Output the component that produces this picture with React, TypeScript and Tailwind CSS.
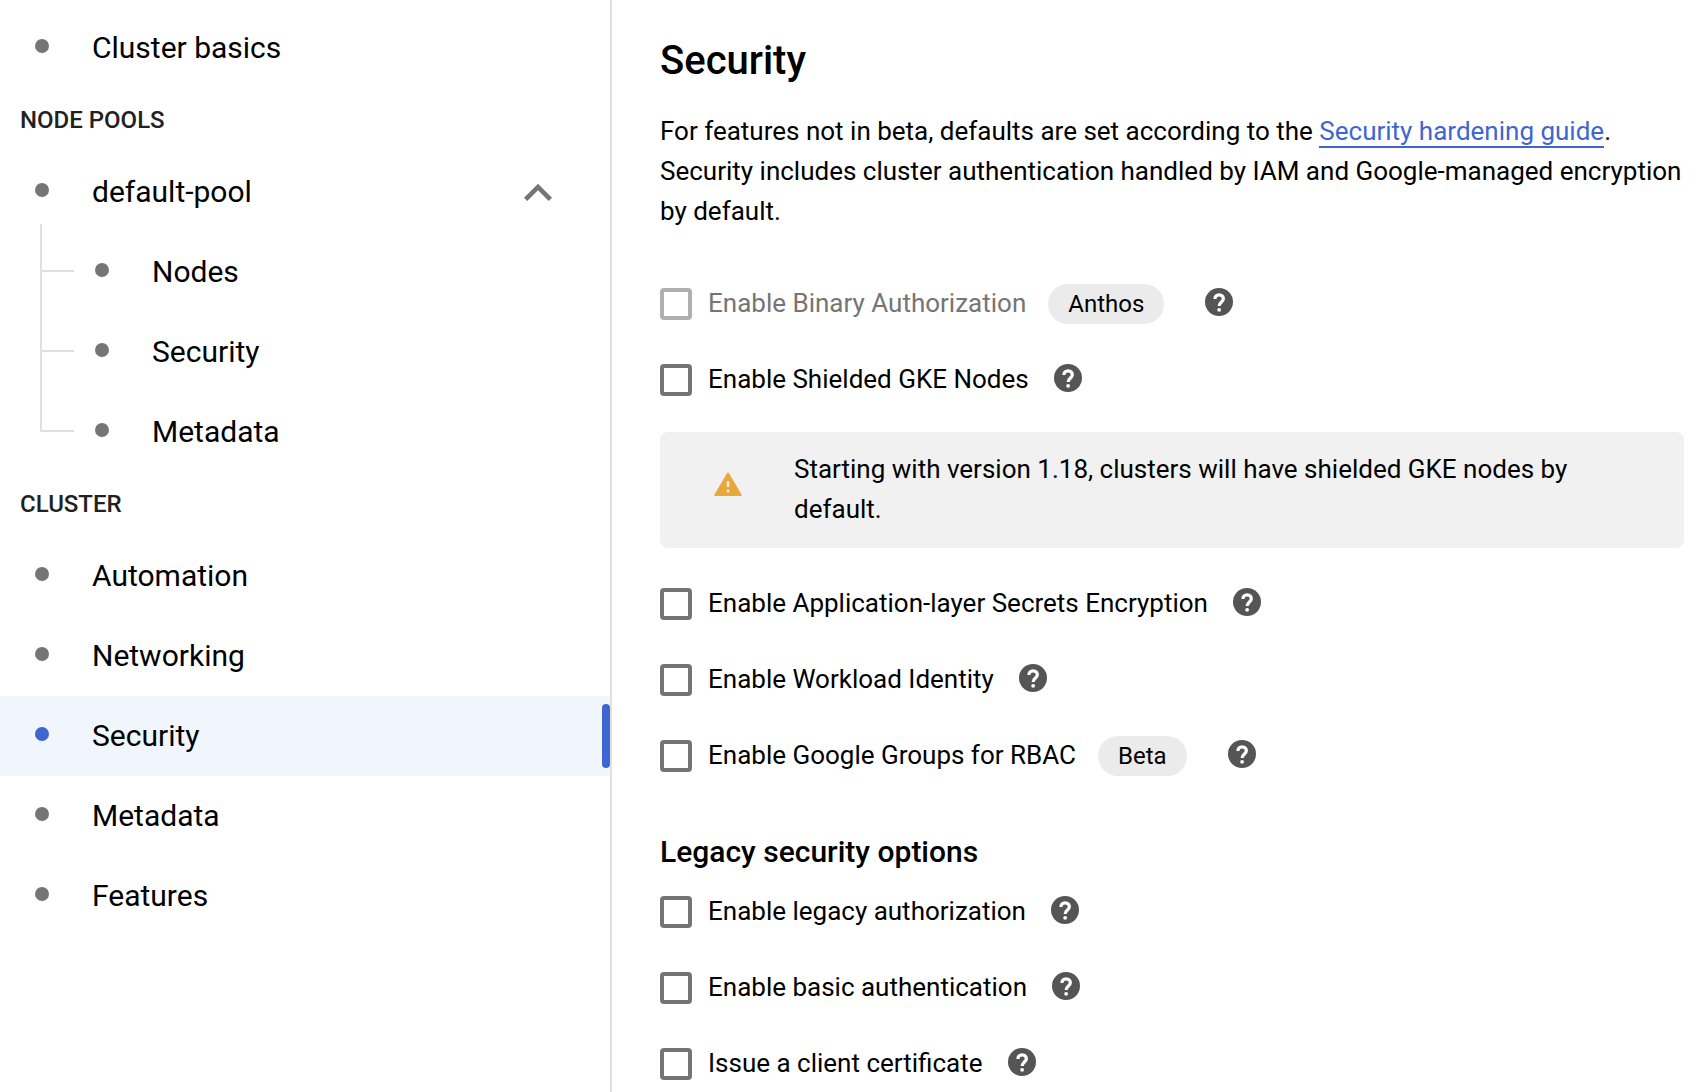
import { useState } from "react";

type NavEntry = { label: string; active?: boolean };

function Dot({ active = false }: { active?: boolean }) {
  return (
    <span
      className={`mb-1 size-3.5 shrink-0 rounded-full ${active ? "bg-[#3f66d0]" : "bg-[#757575]"}`}
    />
  );
}

function NavItem({ label, active = false }: NavEntry) {
  return (
    <li>
      <a
        href="#"
        aria-current={active ? "page" : undefined}
        className={`relative flex h-20 items-center gap-[43px] pl-[35px] ${active ? "bg-[#f0f5fe]" : ""}`}
      >
        <Dot active={active} />
        <span>{label}</span>
        {active && <span className="absolute inset-y-2 right-0 w-2 rounded-sm bg-[#3f66d0]" />}
      </a>
    </li>
  );
}

function SubItem({ label, first = false }: { label: string; first?: boolean }) {
  return (
    <li className="relative">
      <span
        className={`absolute left-10 w-[34px] border-b-2 border-l-2 border-[#e0e0e0] ${
          first ? "-top-2 h-12" : "-top-10 h-20"
        }`}
      />
      <a href="#" className="flex h-20 items-center gap-[43px] pl-[95px]">
        <Dot />
        <span>{label}</span>
      </a>
    </li>
  );
}

function NavHeading({ children }: { children: string }) {
  return (
    <h2 className="flex h-16 items-center pl-5 text-[24px] font-medium text-[#212121]">
      {children}
    </h2>
  );
}

function Sidebar() {
  const [open, setOpen] = useState(true);
  return (
    <nav
      aria-label="Cluster sections"
      className="w-[612px] shrink-0 border-r-2 border-[#e0e0e0] pt-2 text-[30px] leading-10"
    >
      <ul>
        <NavItem label="Cluster basics" />
      </ul>
      <NavHeading>NODE POOLS</NavHeading>
      <ul>
        <li>
          <div className="flex h-20 items-center justify-between pr-11 pl-[35px]">
            <a href="#" className="flex items-center gap-[43px]">
              <Dot />
              <span>default-pool</span>
            </a>
            <button
              type="button"
              aria-label="Toggle default-pool"
              aria-expanded={open}
              onClick={() => setOpen(!open)}
              className="mt-0.5"
            >
              <svg viewBox="0 0 24 24" className="size-14 fill-[#757575]" aria-hidden="true">
                <path d="M12 8l-6 6 1.41 1.41L12 10.83l4.59 4.58L18 14z" />
              </svg>
            </button>
          </div>
          {open && (
            <ul>
              <SubItem label="Nodes" first />
              <SubItem label="Security" />
              <SubItem label="Metadata" />
            </ul>
          )}
        </li>
      </ul>
      <NavHeading>CLUSTER</NavHeading>
      <ul>
        <NavItem label="Automation" />
        <NavItem label="Networking" />
        <NavItem label="Security" active />
        <NavItem label="Metadata" />
        <NavItem label="Features" />
      </ul>
    </nav>
  );
}

type OptionProps = { id: string; label: string; chip?: string; disabled?: boolean };

function Option({ id, label, chip, disabled = false }: OptionProps) {
  return (
    <div className="flex h-10 items-center">
      <input
        id={id}
        type="checkbox"
        disabled={disabled}
        className="size-8 shrink-0 appearance-none rounded-sm border-4 border-[#757575] checked:bg-[#3f66d0] disabled:border-[#b0b0b0]"
      />
      <label htmlFor={id} className={`pb-0.5 pl-4 ${disabled ? "text-[#757575]" : ""}`}>
        {label}
      </label>
      {chip && (
        <span className="mr-4 ml-[22px] flex h-10 items-center rounded-full bg-[#ebebeb] px-5 text-[24px]">
          {chip}
        </span>
      )}
      <button type="button" aria-label={`Help: ${label}`} className="mb-1 ml-[25px]">
        <svg viewBox="2 2 20 20" className="size-7" aria-hidden="true">
          <circle cx="12" cy="12" r="10" fill="#555555" />
          <path
            d="M9.1 9.8C9.1 8.1 10.3 6.9 12.1 6.9s3 1.2 3 2.7c0 2.3-3 2.5-3 5.3"
            fill="none"
            stroke="#ffffff"
            strokeWidth="2.3"
          />
          <circle cx="12.1" cy="17.6" r="1.35" fill="#ffffff" />
        </svg>
      </button>
    </div>
  );
}

export default function App() {
  return (
    <div className="flex min-h-screen bg-white font-['Roboto',sans-serif] text-black">
      <Sidebar />
      <main className="min-w-0 flex-1 pt-[37px] pr-[18px] pl-12 text-[26px] leading-10">
        <h1 className="text-[40px] leading-12 font-medium">Security</h1>
        <p className="mt-[26px]">
          For features not in beta, defaults are set according to the{" "}
          <a href="#" className="border-b-2 border-[#3f66d0] text-[#3f66d0]">
            Security hardening guide
          </a>
          . Security includes cluster authentication handled by IAM and Google-managed encryption by
          default.
        </p>
        <div className="mt-[53px] flex flex-col gap-9">
          <Option id="binary-auth" label="Enable Binary Authorization" chip="Anthos" disabled />
          <Option id="shielded" label="Enable Shielded GKE Nodes" />
        </div>
        <div className="mt-8 flex items-center rounded-lg bg-[#f1f1f1] pt-[17px] pr-14 pb-[19px] pl-[54px]">
          <svg viewBox="1 2 22 19" className="mb-2.5 h-6 w-7 shrink-0" aria-hidden="true">
            <path
              d="M12 3.2L22 20.2H2z"
              fill="#e8a83a"
              stroke="#e8a83a"
              strokeWidth="1.6"
              strokeLinejoin="round"
            />
            <path d="M13 18h-2v-2h2zM13 13.6h-2V9.4h2z" fill="#f1f1f1" />
          </svg>
          <p className="pl-[52px]">
            Starting with version 1.18, clusters will have shielded GKE nodes by default.
          </p>
        </div>
        <div className="mt-9 flex flex-col gap-9">
          <Option id="secrets" label="Enable Application-layer Secrets Encryption" />
          <Option id="workload" label="Enable Workload Identity" />
          <Option id="rbac" label="Enable Google Groups for RBAC" chip="Beta" />
        </div>
        <h2 className="mt-14 text-[30px] leading-10 font-medium">Legacy security options</h2>
        <div className="mt-5 flex flex-col gap-9">
          <Option id="legacy-auth" label="Enable legacy authorization" />
          <Option id="basic-auth" label="Enable basic authentication" />
          <Option id="client-cert" label="Issue a client certificate" />
        </div>
      </main>
    </div>
  );
}
